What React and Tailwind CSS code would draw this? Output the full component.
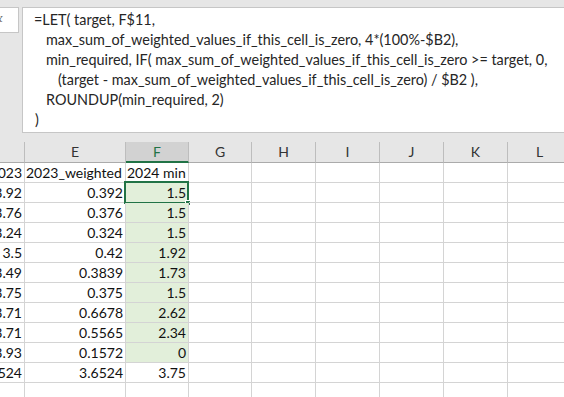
import React from "react";

const FONT = { fontFamily: "Lato, 'Liberation Sans', sans-serif" };

const cols = ["D", "E", "F", "G", "H", "I", "J", "K", "L"];

const rows = [
  ["2023", "2023_weighted", "2024 min"],
  ["3.92", "0.392", "1.5"],
  ["3.76", "0.376", "1.5"],
  ["3.24", "0.324", "1.5"],
  ["3.5", "0.42", "1.92"],
  ["3.49", "0.3839", "1.73"],
  ["3.75", "0.375", "1.5"],
  ["3.71", "0.6678", "2.62"],
  ["3.71", "0.5565", "2.34"],
  ["3.93", "0.1572", "0"],
  ["3.524", "3.6524", "3.75"],
  ["", "", ""],
];

const gridCols =
  "grid grid-cols-[65px_101px_63px_63px_64px_64px_64px_64px_64px] -ml-[40px] w-max";

function FormulaBar() {
  return (
    <div className="flex items-start pt-[7px] h-[142px]">
      {/* fx box */}
      <div className="w-[19px] h-[26px] bg-white border border-l-0 border-[#c6c6c6] overflow-hidden relative">
        <span className="absolute -left-[7px] top-[3px] text-[13px] italic text-[#6b6b6b] leading-none font-serif">
          fx
        </span>
      </div>
      {/* formula text */}
      <div className="ml-[3px] flex-1 h-[126px] bg-white border border-r-0 border-[#c6c6c6] pt-[2px] text-[14.4px] leading-[20px] text-[#262626] whitespace-nowrap">
        <div className="pl-[11px]">=LET( target, F$11,</div>
        <div className="pl-[23px]">
          max_sum_of_weighted_values_if_this_cell_is_zero, 4*(100%-$B2),
        </div>
        <div className="pl-[23px]">
          min_required, IF( max_sum_of_weighted_values_if_this_cell_is_zero &gt;= target, 0,
        </div>
        <div className="pl-[35px]">
          (target - max_sum_of_weighted_values_if_this_cell_is_zero) / $B2 ),
        </div>
        <div className="pl-[23px]">ROUNDUP(min_required, 2)</div>
        <div className="pl-[12px]">)</div>
      </div>
    </div>
  );
}

function Sheet() {
  return (
    <div className="bg-white">
      {/* column headers */}
      <div className={`${gridCols} bg-[#e6e6e6]`}>
        {cols.map((c) => (
          <div
            key={c}
            className={`h-[21px] flex items-center justify-center text-[14px] border-r border-b ${
              c === "F"
                ? "bg-[#d2d2d2] text-[#217346] border-b-2 border-b-[#217346] border-r-[#bdbdbd]"
                : "text-[#333] border-r-[#bdbdbd] border-b-[#ababab]"
            }`}
          >
            <span className="-mt-[1px]">{c}</span>
          </div>
        ))}
      </div>

      {/* data rows */}
      {rows.map((r, ri) => (
        <div key={ri} className={gridCols}>
          {cols.map((c, ci) => {
            const val = r[ci] || "";
            const isHeaderRow = ri === 0;
            const textLeft = isHeaderRow && ci > 0;
            const green = c === "F" && ri >= 1 && ri <= 9;
            return (
              <div
                key={c}
                className={`relative h-[20px] border-r border-b border-[#d4d4d4] flex items-center text-[14px] text-[#111] whitespace-nowrap ${
                  textLeft ? "justify-start pl-[1px]" : "justify-end pr-[2px]"
                } ${green ? "bg-[#e2efda]" : ""}`}
              >
                {val}
                {c === "F" && ri === 1 && (
                  <div className="absolute -left-[2px] -top-[2px] -right-[1px] -bottom-[2px] border-2 border-[#217346]">
                    <div className="absolute -right-[4px] -bottom-[4px] w-[6px] h-[6px] bg-[#217346] border border-white" />
                  </div>
                )}
              </div>
            );
          })}
        </div>
      ))}
    </div>
  );
}

export default function App() {
  return (
    <div
      className="w-[564px] h-[397px] overflow-hidden bg-[#e6e6e6]"
      style={FONT}
    >
      <FormulaBar />
      <Sheet />
    </div>
  );
}
